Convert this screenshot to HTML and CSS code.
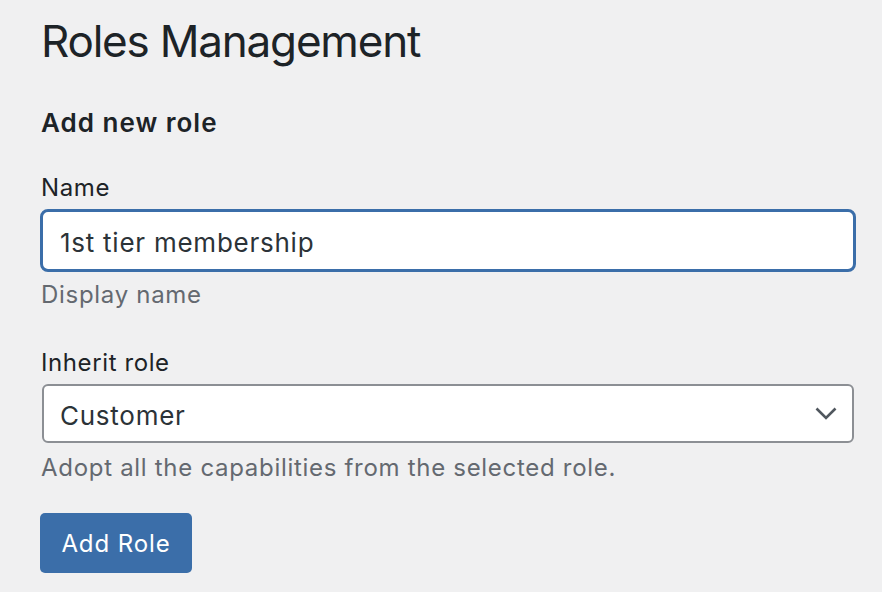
FILE: index.html
```html
<!DOCTYPE html>
<html lang="en">
<head>
<meta charset="utf-8">
<title>Roles Management</title>
<link rel="stylesheet" href="styles.css">
</head>
<body>
<div class="wrap">
  <h1 class="title">Roles Management</h1>
  <form class="form">
    <h2 class="section">Add new role</h2>
    <div class="field field-name">
      <label class="label" for="role-name">Name</label>
      <input class="text-input" id="role-name" type="text" value="1st tier membership">
      <p class="help">Display name</p>
    </div>
    <div class="field field-inherit">
      <label class="label" for="role-inherit">Inherit role</label>
      <div class="select-wrap">
        <select class="select" id="role-inherit">
          <option>Customer</option>
        </select>
        <svg class="chevron" width="22" height="13" viewBox="0 0 22 13" aria-hidden="true">
          <polyline points="1.5,1.5 11,11 20.5,1.5" fill="none" stroke="#50575e" stroke-width="2.6" stroke-linecap="butt" stroke-linejoin="miter"/>
        </svg>
      </div>
      <p class="help">Adopt all the capabilities from the selected role.</p>
    </div>
    <div class="actions">
      <button class="button-primary" type="button">Add Role</button>
    </div>
  </form>
</div>
</body>
</html>
```
FILE: styles.css
```css
html, body {
  margin: 0;
  padding: 0;
  background: #f0f0f1;
}
body {
  font-family: Inter, "Noto Sans", "Liberation Sans", sans-serif;
  color: #1d2327;
}
.wrap {
  padding: 15px 0 0 40px;
  width: 816px;
}
.title {
  margin: 0 0 0 1px;
  font-size: 44px;
  line-height: 52px;
  font-weight: 400;
  color: #1d2327;
  letter-spacing: -1.2px;
}
.form {
  display: flex;
  flex-direction: column;
}
.section {
  margin: 40px 0 0 1px;
  font-size: 26px;
  line-height: 32px;
  font-weight: 600;
  color: #1d2327;
  letter-spacing: 1px;
}
.field {
  display: flex;
  flex-direction: column;
}
.field-name {
  margin-top: 34px;
}
.field-inherit {
  margin-top: 38px;
}
.label {
  margin-left: 1px;
  font-size: 24px;
  line-height: 30px;
  color: #1d2327;
  letter-spacing: 0.6px;
}
.text-input {
  margin: 6px 0 0 0;
  box-sizing: border-box;
  width: 816px;
  height: 63px;
  padding: 3px 17px 0 17px;
  border: 3px solid #3b6ea9;
  border-radius: 8px;
  background: #fff;
  font-family: inherit;
  font-size: 26px;
  letter-spacing: 0.75px;
  color: #2c3338;
  outline: none;
}
.help {
  margin: 8px 0 0 1px;
  font-size: 24px;
  line-height: 30px;
  color: #646970;
  letter-spacing: 0.7px;
}
.field-inherit .help {
  margin-top: 10px;
}
.select-wrap {
  position: relative;
  margin: 6px 0 0 2px;
  width: 812px;
}
.select {
  display: block;
  box-sizing: border-box;
  width: 812px;
  height: 59px;
  padding: 3px 60px 0 16px;
  border: 2px solid #8c8f94;
  border-radius: 6px;
  background: #fff;
  font-family: inherit;
  font-size: 26px;
  letter-spacing: 0.75px;
  color: #2c3338;
  -webkit-appearance: none;
  appearance: none;
  outline: none;
}
.chevron {
  position: absolute;
  right: 17px;
  top: 23px;
  pointer-events: none;
}
.actions {
  margin-top: 30px;
  display: flex;
}
.button-primary {
  box-sizing: border-box;
  width: 152px;
  height: 60px;
  padding: 0;
  border: none;
  border-radius: 5px;
  background: #3b6ea9;
  color: #fff;
  font-family: inherit;
  font-size: 24px;
  letter-spacing: 0.9px;
  cursor: pointer;
}
```
